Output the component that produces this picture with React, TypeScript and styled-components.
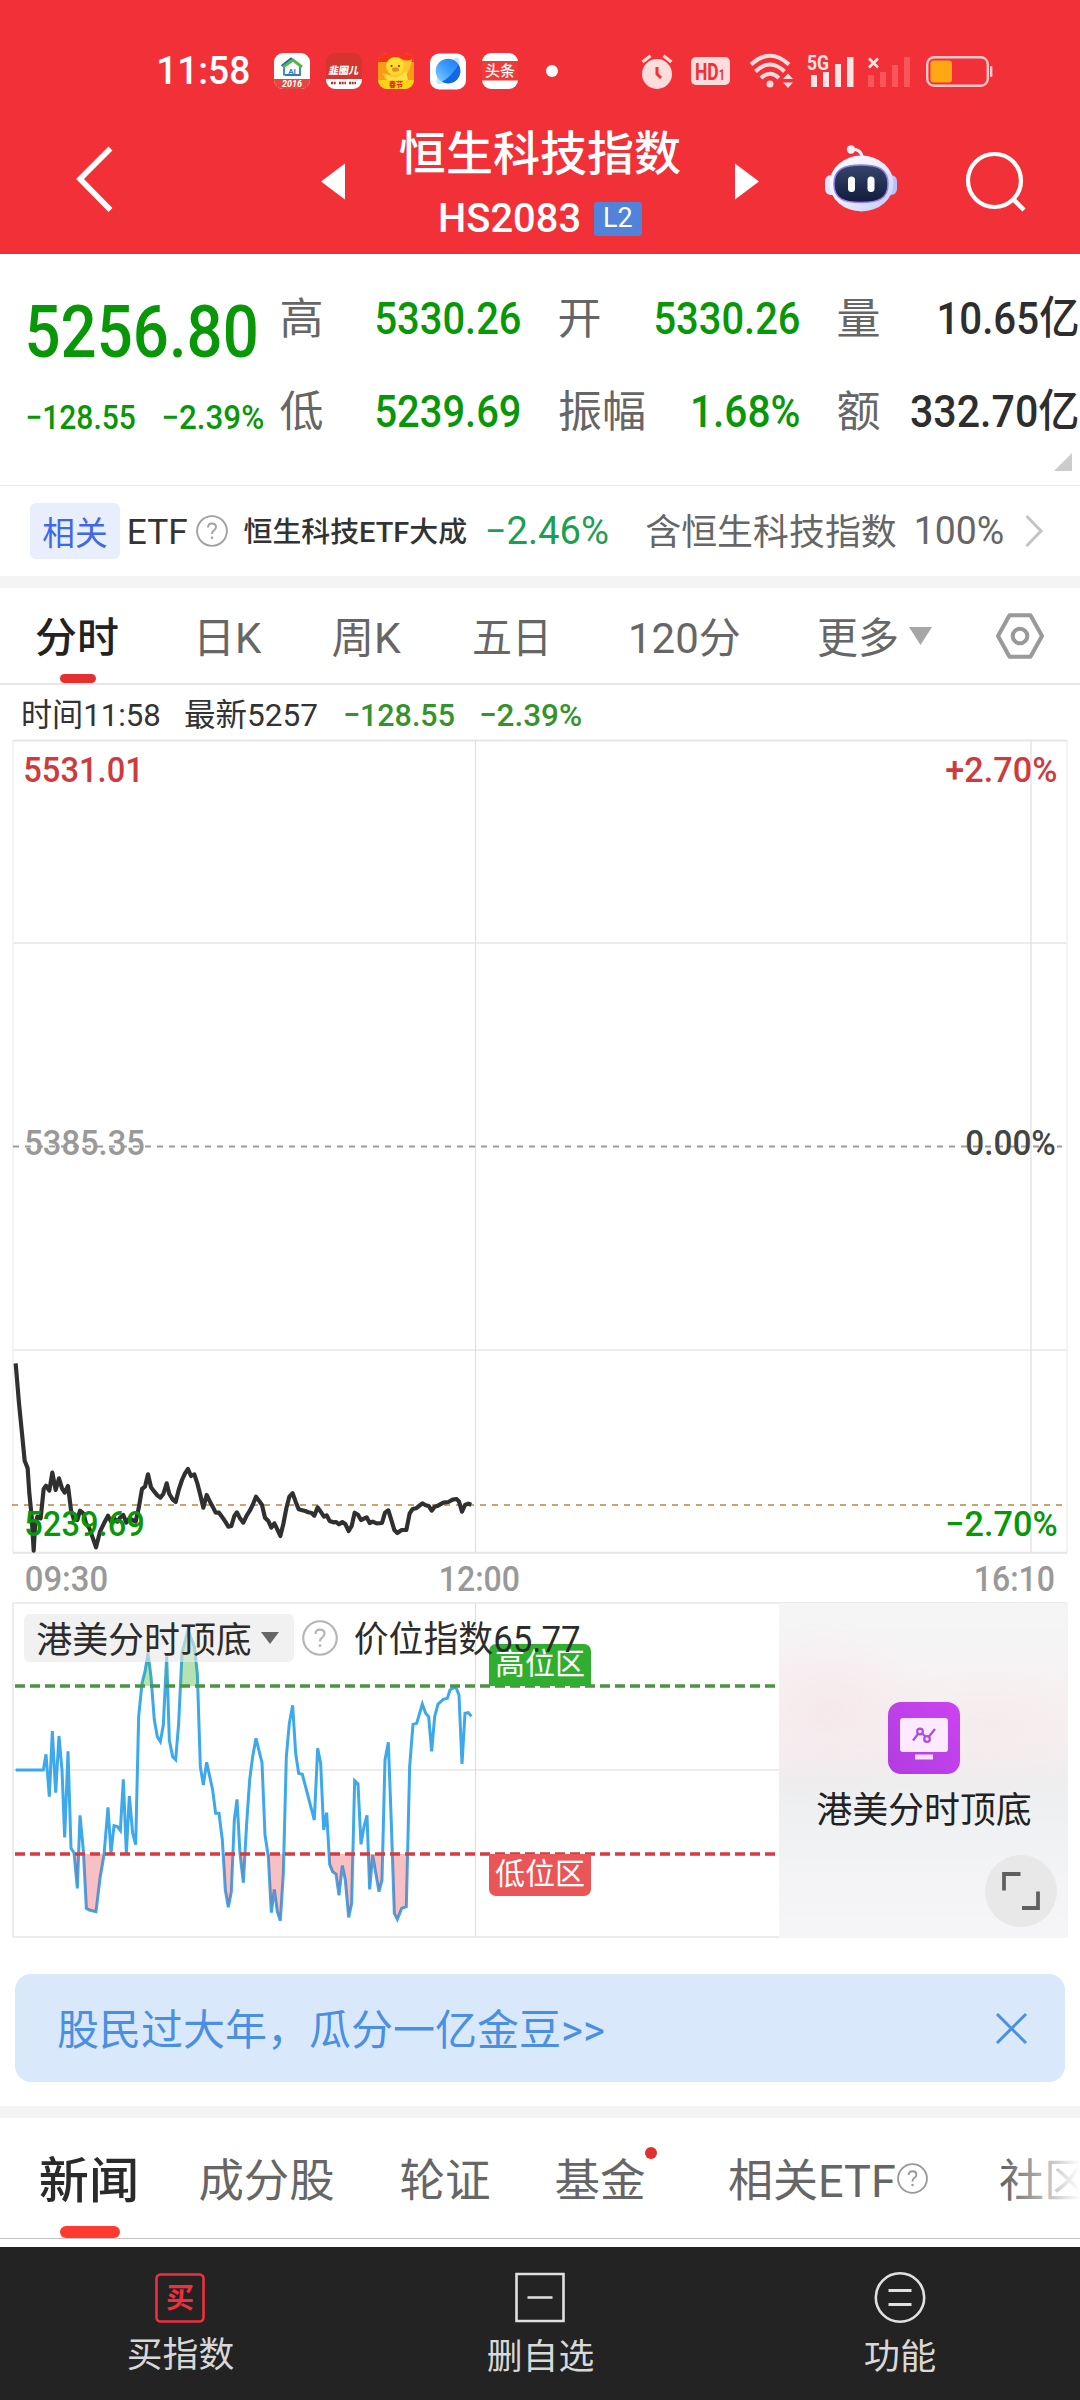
import React, { useLayoutEffect, useRef, useState } from 'react';
import styled, { createGlobalStyle } from 'styled-components';

const GlobalStyle = createGlobalStyle`
  * { box-sizing: border-box; }
  body {
    margin: 0;
    background: #fff;
    font-family: Roboto, 'Noto Sans CJK SC', sans-serif;
    color: #333;
  }
  svg { display: block; flex: none; overflow: visible; }
`;

/* ---------- condensed text ---------- */

interface TextProps {
  size: number;
  color?: string;
  weight?: number;
  width?: number;
  left?: number;
  shift?: number;
  children: string;
}

const TextBox = styled.span<{ $size: number; $color?: string; $weight: number; $width?: number; $left: number; $shift: number }>`
  display: flex;
  justify-content: center;
  flex: none;
  width: ${p => (p.$width ? `${p.$width}px` : 'auto')};
  height: ${p => p.$size}px;
  line-height: ${p => p.$size}px;
  margin-left: ${p => p.$left}px;
  padding-top: ${p => p.$shift}px;
  font-size: ${p => p.$size}px;
  font-weight: ${p => p.$weight};
  color: ${p => p.$color ?? 'inherit'};
  white-space: nowrap;
`;

const TextInner = styled.span`
  flex: none;
  transform-origin: 50% 50%;
`;

/* Squeezes or widens its text so the glyphs fill the given width. */
function Text({ size, color, weight = 400, width, left = 0, shift = 0, children }: TextProps) {
  const ref = useRef<HTMLSpanElement>(null);
  const [scale, setScale] = useState(1);
  useLayoutEffect(() => {
    if (width && ref.current) setScale((width + size * 0.07) / ref.current.offsetWidth);
  }, [width, size, children]);
  return (
    <TextBox $size={size} $color={color} $weight={weight} $width={width} $left={left} $shift={shift}>
      <TextInner ref={ref} style={{ transform: `scaleX(${scale})` }}>{children}</TextInner>
    </TextBox>
  );
}

/* ---------- page ---------- */

const Page = styled.main`
  width: 1080px;
  height: 2400px;
  display: flex;
  flex-direction: column;
  overflow: hidden;
  background: #fff;
`;

const Slot = styled.div<{ $left?: number; $top?: number; $bottom?: number }>`
  flex: none;
  margin-left: ${p => p.$left ?? 0}px;
  margin-top: ${p => p.$top ?? 0}px;
  margin-bottom: ${p => p.$bottom ?? 0}px;
`;

/* ---------- header ---------- */

const Header = styled.header`
  flex: none;
  height: 254px;
  background: #f23037;
  color: #fff;
`;

const StatusBar = styled.div`
  height: 92px;
  padding-top: 50px;
  display: flex;
  align-items: center;
`;

const NavBar = styled.div`
  height: 162px;
  padding-top: 16px;
  display: flex;
  align-items: center;
`;

const TitleColumn = styled.div`
  align-self: flex-start;
  width: 280px;
  margin: 22px 0 0 55px;
  display: flex;
  flex-direction: column;
  align-items: center;
`;

const CodeLine = styled.div`
  width: 202px;
  margin: 21px 0 0 2px;
  display: flex;
  align-items: center;
  justify-content: space-between;
`;

const LevelBadge = styled.span`
  width: 48px;
  height: 34px;
  border-radius: 3px;
  background: #5183da;
  display: flex;
  align-items: center;
  justify-content: center;
`;

const AppTiles = styled.div`
  display: flex;
  gap: 16px;
  margin-left: 24px;
`;

const Dot = styled.i<{ $size: number; $color: string; $left: number }>`
  flex: none;
  width: ${p => p.$size}px;
  height: ${p => p.$size}px;
  margin-left: ${p => p.$left}px;
  border-radius: 50%;
  background: ${p => p.$color};
`;

const StatusApps = () => (
  <AppTiles>
    <svg width="36" height="36" viewBox="0 0 36 36">
      <clipPath id="tile"><rect width="36" height="36" rx="9" /></clipPath>
      <g clipPath="url(#tile)">
        <rect width="36" height="36" fill="#fff" />
        <rect y="26" width="36" height="10" fill="#e8453c" />
        <path d="M10 22.500v-9M26 13.500v8.500H11" fill="none" stroke="#2b7fc0" strokeWidth="1.800" />
        <path d="M7.500 13 17 5.500l3 2.500" fill="none" stroke="#1565a8" strokeWidth="2" />
        <path d="M9 14 19 7l9 7" fill="none" stroke="#54b848" strokeWidth="3" />
        <text x="18" y="21" fontSize="8" fontWeight="700" textAnchor="middle" fill="#2b7fc0">AI</text>
        <text x="18" y="34" fontSize="9" fontWeight="700" fontStyle="italic" textAnchor="middle" fill="#fff">2016</text>
      </g>
    </svg>
    <svg width="36" height="36" viewBox="0 0 36 36">
      <g clipPath="url(#tile)">
        <rect width="36" height="26" fill="#d4352f" />
        <rect y="26" width="36" height="10" fill="#fff" />
        <text x="18" y="21" fontSize="10" fontWeight="800" textAnchor="middle" fill="#fff" transform="skewX(-10) translate(3 0)">韭圈儿</text>
        <path d="M5 30h5M13 30h7M23 30h7" stroke="#a33" strokeWidth="2.400" strokeDasharray="2 .7" />
      </g>
    </svg>
    <svg width="36" height="36" viewBox="0 0 36 36">
      <g clipPath="url(#tile)">
        <rect width="36" height="36" fill="#fb9a16" />
        <rect width="36" height="9" fill="#f5341c" />
        <path d="M20 4q9 6 14 2-1 9-6 17l-20 4-4-7 8 2z" fill="#ffc629" />
        <circle cx="17" cy="13" r="9" fill="#ffdd2e" />
        <path d="M8 21q10 8 20-3l2 9H9z" fill="#ffe04b" />
        <circle cx="13.500" cy="13" r="1.100" fill="#6a3a10" />
        <circle cx="21" cy="13" r="1.100" fill="#6a3a10" />
        <ellipse cx="17.500" cy="16.500" rx="3.600" ry="2.300" fill="#f08a28" />
        <path d="M0 27h36v9H0z" fill="#ffd21a" />
        <text x="18" y="34" fontSize="7" fontWeight="800" textAnchor="middle" fill="#d8321c">春节</text>
      </g>
    </svg>
    <svg width="36" height="36" viewBox="0 0 36 36">
      <linearGradient id="globe" x1="0" y1="1" x2="1" y2="0">
        <stop offset="0" stopColor="#8fd6ff" /><stop offset=".5" stopColor="#3f9cff" /><stop offset="1" stopColor="#1976f2" />
      </linearGradient>
      <rect width="36" height="36" y=".5" rx="9" fill="#fff" />
      <ellipse cx="18" cy="18" rx="16.500" ry="6" transform="rotate(-50 18 18)" fill="#c5e6ff" />
      <circle cx="18" cy="18" r="12.300" fill="url(#globe)" />
      <path d="M28.500 11.500A12.300 12.300 0 0 1 12 28.800Q22 23 28.500 11.500z" fill="#1468e0" />
    </svg>
    <svg width="36" height="36" viewBox="0 0 36 36">
      <g clipPath="url(#tile)">
        <rect width="36" height="36" fill="#fff" />
        <rect y="8" width="36" height="19.500" fill="#ef3b38" />
        <text x="18" y="23.300" fontSize="15" fontWeight="500" textAnchor="middle" fill="#fff">头条</text>
      </g>
    </svg>
  </AppTiles>
);

const AlarmIcon = () => (
  <svg width="32" height="35" viewBox="0 0 32 35">
    <circle cx="16" cy="20" r="15" fill="#ffdcdc" />
    <path d="M1.500 8 9.500 1.800M30.500 8 22.500 1.800" stroke="#ffdcdc" strokeWidth="3.200" />
    <path d="M16 13v7l4 4" fill="none" stroke="#f23037" strokeWidth="3" />
  </svg>
);

const HdIcon = () => (
  <svg width="39" height="28" viewBox="0 0 39 28">
    <rect width="39" height="28" rx="5" fill="#ffdcdc" />
    <text transform="translate(4 22.500) scale(.76 1)" fontSize="23" fontWeight="700" fill="#f23037">
      HD<tspan fontSize="14">1</tspan>
    </text>
  </svg>
);

const WifiIcon = () => (
  <svg width="45" height="36" viewBox="0 0 45 36">
    <g fill="none" stroke="#ffdcdc" strokeWidth="4">
      <path d="M2 11.500Q21 -6 40 11.500" />
      <path d="M6.500 18.500Q21 4.500 35.500 18.500" />
      <path d="M12 25Q21 16.500 30 25" />
    </g>
    <circle cx="21" cy="31" r="3.500" fill="#ffdcdc" />
    <path d="M34 26l5-5.500 5 5.500zM34 29.500l5 5.500 5-5.500z" fill="#ffdcdc" />
  </svg>
);

const SignalIcon = () => (
  <svg width="48" height="36" viewBox="0 0 48 36">
    <g fill="#ffe4e4">
      <rect x="4" y="22" width="6" height="12" /><rect x="16" y="19" width="6" height="15" />
      <rect x="28" y="11" width="6" height="23" /><rect x="40" y="4" width="6.500" height="30" />
    </g>
    <text x="0" y="16.500" fontSize="20" fontWeight="700" fill="#ffe4e4" textLength="22" lengthAdjust="spacingAndGlyphs">5G</text>
  </svg>
);

const NoSignalIcon = () => (
  <svg width="44" height="36" viewBox="0 0 44 36">
    <g fill="#f8565b">
      <rect x="1" y="22" width="6" height="12" /><rect x="13" y="19" width="6" height="15" />
      <rect x="25" y="12" width="6" height="22" /><rect x="37" y="4" width="6" height="30" />
    </g>
    <path d="M2 5.500l9 9M11 5.500l-9 9" stroke="#ffe4e4" strokeWidth="2.600" />
  </svg>
);

const BatteryIcon = () => (
  <svg width="68" height="31" viewBox="0 0 68 31">
    <rect x="1.200" y="1.200" width="60.600" height="28.600" rx="7" fill="none" stroke="#ffc9ca" strokeWidth="2.400" />
    <rect x="4.500" y="4.500" width="21.500" height="22" rx="3" fill="#ffa813" />
    <rect x="64" y="10" width="2.400" height="11" rx="1" fill="#ffc9ca" />
  </svg>
);

const RobotIcon = () => (
  <svg width="72" height="68" viewBox="0 0 72 68">
    <linearGradient id="shell" x1="0" y1="0" x2="1" y2="1">
      <stop offset="0" stopColor="#ffffff" /><stop offset=".5" stopColor="#eceefd" /><stop offset="1" stopColor="#bcc8fb" />
    </linearGradient>
    <linearGradient id="visor" x1="0" y1="0" x2="0" y2="1">
      <stop offset="0" stopColor="#36456a" /><stop offset="1" stopColor="#111b3c" />
    </linearGradient>
    <path d="M26 4.500q10-1.500 11.500 9" fill="none" stroke="#f4ecff" strokeWidth="3.200" />
    <circle cx="26" cy="4.500" r="4.200" fill="#fbeef4" />
    <rect x="0" y="30" width="14" height="20" rx="6" fill="#dfe6ff" />
    <rect x="58" y="30" width="14" height="20" rx="6" fill="#b4c3f8" />
    <ellipse cx="36.500" cy="38.500" rx="32" ry="28" fill="url(#shell)" />
    <path d="M36 20c17 0 27 4 27 19s-10 18.500-27 18.500S9 54 9 39s10-19 27-19z" fill="url(#visor)" stroke="#9a7cf0" strokeWidth="1.500" />
    <rect x="23" y="31.500" width="7" height="15.500" rx="3.500" fill="#fff" />
    <rect x="42.500" y="31.500" width="7" height="15.500" rx="3.500" fill="#fff" />
  </svg>
);

/* ---------- quote ---------- */

const GREEN = '#079707';

const Quote = styled.section`
  position: relative;
  flex: none;
  height: 232px;
  padding-left: 27px;
  display: flex;
  border-bottom: 1.500px solid #e8e8e8;
`;

const PriceColumn = styled.div`
  width: 237px;
  padding-top: 42px;
`;

const ChangeLine = styled.div`
  width: 236px;
  margin-top: 31px;
  display: flex;
  justify-content: space-between;
`;

const Stats = styled.div`
  margin-left: 17px;
  padding-top: 18px;
  display: grid;
  grid-template-columns: 239px 240px 240px;
  grid-auto-rows: 93px;
  column-gap: 39px;
`;

const Stat = styled.div`
  display: flex;
  align-items: center;
  justify-content: space-between;
`;

const FoldCorner = styled.i`
  position: absolute;
  right: 8px;
  bottom: 14px;
  border-left: 18px solid transparent;
  border-bottom: 18px solid #ccc;
`;

const stats: [string, string, number, string][] = [
  ['高', '5330.26', 144, GREEN],
  ['开', '5330.26', 144, GREEN],
  ['量', '10.65亿', 140, '#2e2e2e'],
  ['低', '5239.69', 144, GREEN],
  ['振幅', '1.68%', 107, GREEN],
  ['额', '332.70亿', 166, '#2e2e2e'],
];

/* ---------- related ETF ---------- */

const Related = styled.section`
  flex: none;
  height: 90px;
  padding-left: 30px;
  display: flex;
  align-items: center;
`;

const RelatedBadge = styled.span`
  width: 90px;
  height: 56px;
  border-radius: 6px;
  background: #e8eefc;
  display: flex;
  align-items: center;
  justify-content: center;
`;

const Band = styled.div<{ $height: number }>`
  flex: none;
  height: ${p => p.$height}px;
  background: #f4f4f4;
`;

const HelpIcon = ({ size, color }: { size: number; color: string }) => (
  <svg width={size} height={size} viewBox="0 0 32 32">
    <circle cx="16" cy="16" r="14.900" fill="none" stroke={color} strokeWidth="1.900" />
    <path d="M12 12.500q0-4 4-4t4 3.600q0 2-2.200 3.500-1.800 1.200-1.800 3.400" fill="none" stroke={color} strokeWidth="1.900" />
    <circle cx="16" cy="22.800" r="1.300" fill={color} />
  </svg>
);

/* ---------- period tabs ---------- */

const PeriodTabs = styled.nav`
  position: relative;
  flex: none;
  height: 97px;
  display: flex;
  align-items: center;
  color: #666;
  border-bottom: 2px solid #e6e6e6;
`;

const Underline = styled.i<{ $left: number; $width: number; $height: number; $color: string }>`
  position: absolute;
  left: ${p => p.$left}px;
  bottom: 0;
  width: ${p => p.$width}px;
  height: ${p => p.$height}px;
  border-radius: ${p => p.$height / 2}px;
  background: ${p => p.$color};
`;

const InfoLine = styled.div`
  flex: none;
  height: 55px;
  padding-top: 4px;
  display: flex;
  align-items: center;
`;

/* ---------- charts ---------- */

const ChartArea = styled.section<{ $height: number }>`
  position: relative;
  flex: none;
  height: ${p => p.$height}px;
`;

const Overlay = styled.div<{ $x: number; $y: number }>`
  position: absolute;
  left: ${p => p.$x}px;
  top: ${p => p.$y}px;
`;

const priceLine =
  '47,70 57,190 66,280 74,362 83,385 88,460 95,530 101,632 105,560 112,530 122,535 131,447 138,437 148,452 157,398 167,450 177,415 186,445 194,458 204,438 213,510 222,540 232,540 240,512 250,520 258,550 268,565 277,590 288,622 300,575 312,550 324,527 333,545 342,535 352,545 361,532 370,525 379,548 388,535 398,540 407,545 416,505 426,447 435,440 444,403 453,442 463,455 472,466 481,473 490,462 500,430 508,462 518,478 527,486 536,450 546,420 555,400 564,387 573,408 583,403 592,430 601,465 610,503 620,465 630,485 638,500 647,518 657,518 667,532 676,545 685,560 694,558 703,528 711,517 720,535 730,548 740,527 749,513 758,495 768,470 777,482 786,495 795,533 805,543 814,563 823,550 832,568 841,588 850,552 859,505 868,470 878,460 887,485 896,508 907,511 916,513 925,517 935,519 943,527 953,502 962,515 972,530 980,526 989,543 1000,547 1008,546 1017,553 1027,546 1036,552 1046,573 1055,558 1064,518 1074,524 1083,540 1100,532 1109,549 1118,545 1130,550 1146,549 1155,518 1165,511 1174,540 1183,570 1192,579 1205,570 1219,570 1229,520 1238,507 1248,505 1257,498 1267,490 1277,496 1286,498 1295,512 1304,500 1314,497 1330,488 1345,486 1358,479 1370,477 1377,485 1386,515 1395,495 1405,491 1414,494';

const indexLine =
  '47,540 130,540 138,493 148,620 157,423 167,608 177,438 186,540 194,742 204,484 213,775 222,788 232,895 240,676 250,780 259,955 268,960 288,965 300,865 312,795 324,652 333,790 342,707 352,710 361,722 370,568 379,790 388,618 398,730 407,764 416,380 426,280 435,245 444,190 453,260 463,390 472,440 481,455 490,405 500,200 508,450 518,500 527,509 536,400 546,190 564,120 583,170 592,250 601,530 610,585 620,517 638,600 647,670 657,670 667,750 676,900 685,952 694,905 703,690 711,628 720,790 730,878 740,700 749,570 758,500 768,445 786,518 795,735 805,800 814,968 823,898 832,965 841,992 850,850 859,500 868,400 878,346 887,490 896,550 907,553 943,690 953,475 962,520 971,720 980,668 989,823 998,845 1008,852 1017,916 1027,827 1036,870 1046,982 1055,940 1064,572 1074,582 1083,763 1092,710 1101,676 1109,898 1118,795 1137,905 1146,870 1155,510 1165,457 1174,700 1183,970 1192,988 1205,955 1219,950 1229,530 1239,403 1250,400 1267,342 1277,370 1286,380 1295,484 1304,380 1314,342 1330,328 1342,325 1350,300 1367,290 1377,315 1386,522 1395,370 1405,368 1414,379';

const PriceChart = () => (
  <svg width="1080" height="863" viewBox="0 0 1080 863">
    <g stroke="#e6e6e6" strokeWidth="1.500" fill="none">
      <path d="M13 203h1054M13 610h1054" />
      <path d="M475.500 0v813M1031 0v813" stroke="#dedede" strokeWidth="1.200" />
      <path d="M13 0v813M1067 0v813" stroke="#efefef" />
      <path d="M13 .5h1054M13 812.800h1054" strokeWidth="2" />
    </g>
    <path d="M13 406.500h1049" stroke="#9b9b9b" strokeWidth="2" strokeDasharray="6 6" />
    <path d="M12 765h1050" stroke="#c9a56b" strokeWidth="1.800" strokeDasharray="6 6" />
    <g transform="translate(0 600) scale(.33333)">
      <polyline points={priceLine} fill="none" stroke="#303030" strokeWidth="12.500" strokeLinejoin="round" />
    </g>
  </svg>
);

const PanelRow = styled.section`
  position: relative;
  flex: none;
  height: 371px;
  display: flex;
`;

const IndexChart = () => (
  <svg width="779" height="336" viewBox="0 0 779 336">
    <g stroke="#e6e6e6" strokeWidth="1.500" fill="none">
      <path d="M13 167h766M13 0v334" />
      <path d="M475.500 0v334" stroke="#dedede" strokeWidth="1.200" />
      <path d="M13 0h1054M13 334h766" />
    </g>
    <g transform="translate(0 -13) scale(.33333)">
      <clipPath id="high"><rect x="40" y="0" width="1400" height="288" /></clipPath>
      <clipPath id="low"><rect x="40" y="792" width="1400" height="300" /></clipPath>
      <polyline points={indexLine} fill="none" stroke="#3da9ea" strokeWidth="9" />
      <polygon points={`47,288 ${indexLine} 1414,288`} fill="#39b339" fillOpacity=".38" clipPath="url(#high)" />
      <polygon points={`47,792 ${indexLine} 1414,792`} fill="#e63c46" fillOpacity=".32" clipPath="url(#low)" />
    </g>
    <path d="M15 83h762" stroke="#4a9440" strokeWidth="3.400" strokeDasharray="10 5" />
    <path d="M15 251h762" stroke="#d83a42" strokeWidth="3.400" strokeDasharray="10 5" />
  </svg>
);

const ZoneTag = styled.span<{ $low?: boolean }>`
  width: 102px;
  height: 42px;
  padding-bottom: ${p => (p.$low ? 3 : 2)}px;
  display: flex;
  align-items: center;
  justify-content: center;
  color: #fff;
  background: ${p => (p.$low ? '#ea5558' : '#2fae2f')};
  border-radius: ${p => (p.$low ? '0 0 7px 7px' : '7px 7px 0 0')};
`;

const LegendLine = styled.div`
  display: flex;
  align-items: center;
`;

const IndicatorPill = styled.span`
  width: 270px;
  height: 48px;
  border-radius: 6px;
  background: rgba(232, 232, 232, 0.62);
  display: flex;
  align-items: center;
`;

const SidePanel = styled.aside`
  position: relative;
  width: 289px;
  height: 335px;
  padding-top: 99px;
  display: flex;
  flex-direction: column;
  align-items: center;
  background:
    radial-gradient(110px 90px at 50px 110px, rgba(248, 226, 231, 0.6), rgba(248, 226, 231, 0)),
    radial-gradient(150px 70px at 210px 125px, rgba(246, 230, 232, 0.6), rgba(246, 230, 232, 0)),
    linear-gradient(#f5f5f5 0%, #f5f2f3 40%, #eeeeef 53%, #eff1f2 68%, #f4f4f7 84%, #f5f4f8 100%);
`;

const ExpandButton = styled.button`
  position: absolute;
  right: 11px;
  bottom: 11px;
  width: 72px;
  height: 72px;
  padding: 0;
  border: 0;
  border-radius: 50%;
  background: #e8e8e9;
  display: flex;
  align-items: center;
  justify-content: center;
`;

/* ---------- banner and lower tabs ---------- */

const Banner = styled.section`
  flex: none;
  width: 1050px;
  height: 108px;
  margin: 0 15px 24px;
  border-radius: 16px;
  background: #dae8fb;
  display: flex;
  align-items: center;
`;

const NewsTabs = styled.nav`
  position: relative;
  flex: none;
  height: 121px;
  display: flex;
  align-items: center;
  color: #666;
  border-bottom: 1.500px solid #c4c4c4;
`;

const TabFade = styled.i`
  position: absolute;
  right: 0;
  top: 0;
  width: 76px;
  height: 115px;
  background: linear-gradient(90deg, rgba(255, 255, 255, 0), #fff);
`;

const BadgeDot = styled(Dot)`
  align-self: flex-start;
  margin-top: 29px;
`;

const BottomBar = styled.footer`
  flex: none;
  height: 153px;
  margin-top: 8px;
  padding-top: 25px;
  display: grid;
  grid-template-columns: repeat(3, 360px);
  background: #232323;
  color: #d8d8d8;
`;

const BottomItem = styled.div`
  display: flex;
  flex-direction: column;
  align-items: center;
  gap: 13px;
`;

export default function App() {
  return (
    <Page>
      <GlobalStyle />
      <Header>
        <StatusBar>
          <Text size={38} width={91} left={158} weight={500}>11:58</Text>
          <Slot $left={1}><StatusApps /></Slot>
          <Dot $size={12} $color="#fff" $left={28} />
          <Slot $left={83}><AlarmIcon /></Slot>
          <Slot $left={18}><HdIcon /></Slot>
          <Slot $left={19}><WifiIcon /></Slot>
          <Slot $left={13}><SignalIcon /></Slot>
          <Slot $left={12}><NoSignalIcon /></Slot>
          <Slot $left={15}><BatteryIcon /></Slot>
        </StatusBar>
        <NavBar>
          <Slot $left={77} $bottom={3}>
            <svg width="36" height="66" viewBox="0 0 36 66"><path d="M33.500 1.500 3 32l30.500 31" fill="none" stroke="#fff" strokeWidth="5.500" /></svg>
          </Slot>
          <Slot $left={208}>
            <svg width="24" height="36" viewBox="0 0 24 36"><path d="M0 18.500 24 .5v36z" fill="#fff" /></svg>
          </Slot>
          <TitleColumn>
            <Text size={47} width={279} weight={500}>恒生科技指数</Text>
            <CodeLine>
              <Text size={41} width={140} weight={500}>HS2083</Text>
              <LevelBadge><Text size={27} width={28}>L2</Text></LevelBadge>
            </CodeLine>
          </TitleColumn>
          <Slot $left={55}>
            <svg width="24" height="36" viewBox="0 0 24 36"><path d="M24 18.500 0 .5v36z" fill="#fff" /></svg>
          </Slot>
          <Slot $left={66} $bottom={4}><RobotIcon /></Slot>
          <Slot $left={69}>
            <svg width="60" height="58" viewBox="0 0 60 58">
              <circle cx="28.500" cy="28.500" r="26.500" fill="none" stroke="#fff" strokeWidth="4.200" />
              <path d="M47 47l11 11" stroke="#fff" strokeWidth="4.500" />
            </svg>
          </Slot>
        </NavBar>
      </Header>

      <Quote>
        <PriceColumn>
          <Text size={73} width={229} weight={500} color={GREEN}>5256.80</Text>
          <ChangeLine>
            <Text size={34} width={108} weight={500} color={GREEN}>−128.55</Text>
            <Text size={34} width={101} weight={500} color={GREEN}>−2.39%</Text>
          </ChangeLine>
        </PriceColumn>
        <Stats>
          {stats.map(([label, value, width, color]) => (
            <Stat key={label}>
              <Text size={43} width={label.length === 2 ? 85 : 41} color="#666" shift={1}>{label}</Text>
              <Text size={45} width={width} weight={500} color={color}>{value}</Text>
            </Stat>
          ))}
        </Stats>
        <FoldCorner />
      </Quote>

      <Related>
        <RelatedBadge><Text size={33} width={63} color="#3f68e4" shift={2}>相关</Text></RelatedBadge>
        <Text size={35} width={58} left={8} shift={1}>ETF</Text>
        <Slot $left={10}><HelpIcon size={32} color="#a2a2a2" /></Slot>
        <Text size={28} width={222} left={16} weight={500} shift={2}>恒生科技ETF大成</Text>
        <Text size={38} width={122} left={20} color="#1a9f55">−2.46%</Text>
        <Text size={36} width={249} left={38} color="#666" shift={2}>含恒生科技指数</Text>
        <Text size={38} width={88} left={20} color="#666">100%</Text>
        <Slot $left={22}>
          <svg width="18" height="32" viewBox="0 0 18 32"><path d="M1.500 1 16 16 1.500 31" fill="none" stroke="#c4c4c4" strokeWidth="3" /></svg>
        </Slot>
      </Related>
      <Band $height={12} />

      <PeriodTabs>
        <Text size={41} width={81} left={36} weight={500} color="#222" shift={3}>分时</Text>
        <Text size={42} width={65} left={78} shift={3}>日K</Text>
        <Text size={42} width={66} left={73} shift={3}>周K</Text>
        <Text size={42} width={77} left={74} shift={3}>五日</Text>
        <Text size={42} width={110} left={79} shift={3}>120分</Text>
        <Text size={42} width={79} left={79} shift={3}>更多</Text>
        <Slot $left={12}>
          <svg width="23" height="18" viewBox="0 0 23 18"><path d="M0 0h23L11.500 18z" fill="#a6a6a6" /></svg>
        </Slot>
        <Slot $left={64}>
          <svg width="48" height="46" viewBox="0 0 48 46">
            <path d="M13.500 2.200h21L46 23 34.500 43.800h-21L2 23z" fill="none" stroke="#999" strokeWidth="4" strokeLinejoin="round" />
            <circle cx="24" cy="23" r="7.300" fill="none" stroke="#999" strokeWidth="4" />
          </svg>
        </Slot>
        <Underline $left={60} $width={36} $height={9} $color="#e63030" />
      </PeriodTabs>
      <InfoLine>
        <Text size={32} width={138} left={22}>时间11:58</Text>
        <Text size={32} width={132} left={25}>最新5257</Text>
        <Text size={32} width={110} left={27} weight={500} color="#35932c">−128.55</Text>
        <Text size={32} width={101} left={26} weight={500} color="#35932c">−2.39%</Text>
      </InfoLine>

      <ChartArea $height={863}>
        <PriceChart />
        <Overlay $x={25} $y={13}><Text size={35} width={118} weight={500} color="#cf3a3c">5531.01</Text></Overlay>
        <Overlay $x={946} $y={13}><Text size={35} width={110} weight={500} color="#cf3a3c">+2.70%</Text></Overlay>
        <Overlay $x={26} $y={386}><Text size={35} width={118} weight={500} color="#999">5385.35</Text></Overlay>
        <Overlay $x={967} $y={386}><Text size={35} width={88} weight={500} color="#444">0.00%</Text></Overlay>
        <Overlay $x={26} $y={767}><Text size={35} width={118} weight={500} color={GREEN}>5239.69</Text></Overlay>
        <Overlay $x={946} $y={767}><Text size={35} width={110} weight={500} color={GREEN}>−2.70%</Text></Overlay>
        <Overlay $x={26} $y={822}><Text size={35} width={81} weight={500} color="#999">09:30</Text></Overlay>
        <Overlay $x={440} $y={822}><Text size={35} width={79} weight={500} color="#999">12:00</Text></Overlay>
        <Overlay $x={975} $y={822}><Text size={35} width={79} weight={500} color="#999">16:10</Text></Overlay>
      </ChartArea>

      <PanelRow>
        <IndexChart />
        <SidePanel>
          <svg width="72" height="72" viewBox="0 0 72 72">
            <linearGradient id="violet" x1="0" y1="1" x2="1" y2="0">
              <stop offset="0" stopColor="#b03ce0" /><stop offset="1" stopColor="#cc44f0" />
            </linearGradient>
            <rect width="72" height="72" rx="13" fill="url(#violet)" />
            <rect x="12" y="16" width="48" height="34" rx="3" fill="#fdeaff" />
            <rect x="27" y="52.500" width="18" height="5" fill="#f7dfff" />
            <g fill="none" stroke="#b548dd" strokeWidth="2.200">
              <path d="M25 38.500l5-6.500M34 31.500l3.500 3M41 34.500l6-7.500" />
              <circle cx="32" cy="29.500" r="2.800" /><circle cx="39" cy="37" r="2.800" />
            </g>
          </svg>
          <Slot $top={19}><Text size={36} width={213} color="#222">港美分时顶底</Text></Slot>
          <ExpandButton>
            <svg width="38" height="38" viewBox="0 0 38 38">
              <path d="M2 18.500V2h16.500M20 36h16V19.500" fill="none" stroke="#606060" strokeWidth="3.800" />
            </svg>
          </ExpandButton>
        </SidePanel>
        <Overlay $x={489} $y={41}><ZoneTag><Text size={30} width={88}>高位区</Text></ZoneTag></Overlay>
        <Overlay $x={489} $y={251}><ZoneTag $low><Text size={30} width={88}>低位区</Text></ZoneTag></Overlay>
        <Overlay $x={24} $y={11}>
          <LegendLine>
            <IndicatorPill>
              <Text size={36} width={213} left={13} shift={3} color="#2c2c2c">港美分时顶底</Text>
              <Slot $left={11}>
                <svg width="18" height="12" viewBox="0 0 18 12"><path d="M0 0h18L9 12z" fill="#666" /></svg>
              </Slot>
            </IndicatorPill>
            <Slot $left={8}><HelpIcon size={36} color="#b5b5b5" /></Slot>
            <Text size={36} width={224} left={17} shift={2} color="#2c2c2c">价位指数65.77</Text>
          </LegendLine>
        </Overlay>
      </PanelRow>

      <Banner>
        <Text size={42} width={545} left={43} color="#4a90e2" shift={3}>股民过大年，瓜分一亿金豆&gt;&gt;</Text>
        <Slot $left={393}>
          <svg width="31" height="31" viewBox="0 0 31 31"><path d="M1 1l29 29M30 1 1 30" stroke="#4a90e2" strokeWidth="3" /></svg>
        </Slot>
      </Banner>
      <Band $height={12} />

      <NewsTabs>
        <Text size={49} width={97} left={40} weight={500} color="#2a2a2a" shift={3}>新闻</Text>
        <Text size={45} width={133} left={63} shift={3}>成分股</Text>
        <Text size={45} width={88} left={68} shift={3}>轮证</Text>
        <Text size={45} width={88} left={67} shift={3}>基金</Text>
        <BadgeDot $size={12} $color="#e03030" $left={1} />
        <Text size={45} width={165} left={72} shift={3}>相关ETF</Text>
        <Slot $left={3}><HelpIcon size={31} color="#999" /></Slot>
        <Text size={45} left={71} shift={3}>社区</Text>
        <TabFade />
        <Underline $left={60} $width={60} $height={12} $color="#ff3b30" />
      </NewsTabs>

      <BottomBar>
        <BottomItem>
          <svg width="50" height="52" viewBox="0 0 50 52">
            <rect x="1.500" y="2.500" width="47" height="47" rx="4" fill="none" stroke="#ee3040" strokeWidth="2.600" />
            <text x="25" y="36" fontSize="28" fontWeight="700" textAnchor="middle" fill="#ee3040">买</text>
          </svg>
          <Text size={35} width={105} shift={1}>买指数</Text>
        </BottomItem>
        <BottomItem>
          <svg width="50" height="52" viewBox="0 0 50 52">
            <path d="M1.500 2h47v47h-47zM12.500 25.500h25" fill="none" stroke="#e0e0e0" strokeWidth="2.600" />
          </svg>
          <Text size={35} width={105} shift={3}>删自选</Text>
        </BottomItem>
        <BottomItem>
          <svg width="52" height="52" viewBox="0 0 52 52">
            <circle cx="26" cy="25.500" r="24.200" fill="none" stroke="#e0e0e0" strokeWidth="2.600" />
            <path d="M14.500 18.500h23M14.500 32.500h23" stroke="#e0e0e0" strokeWidth="2.800" />
          </svg>
          <Text size={35} width={70} shift={3}>功能</Text>
        </BottomItem>
      </BottomBar>
    </Page>
  );
}
